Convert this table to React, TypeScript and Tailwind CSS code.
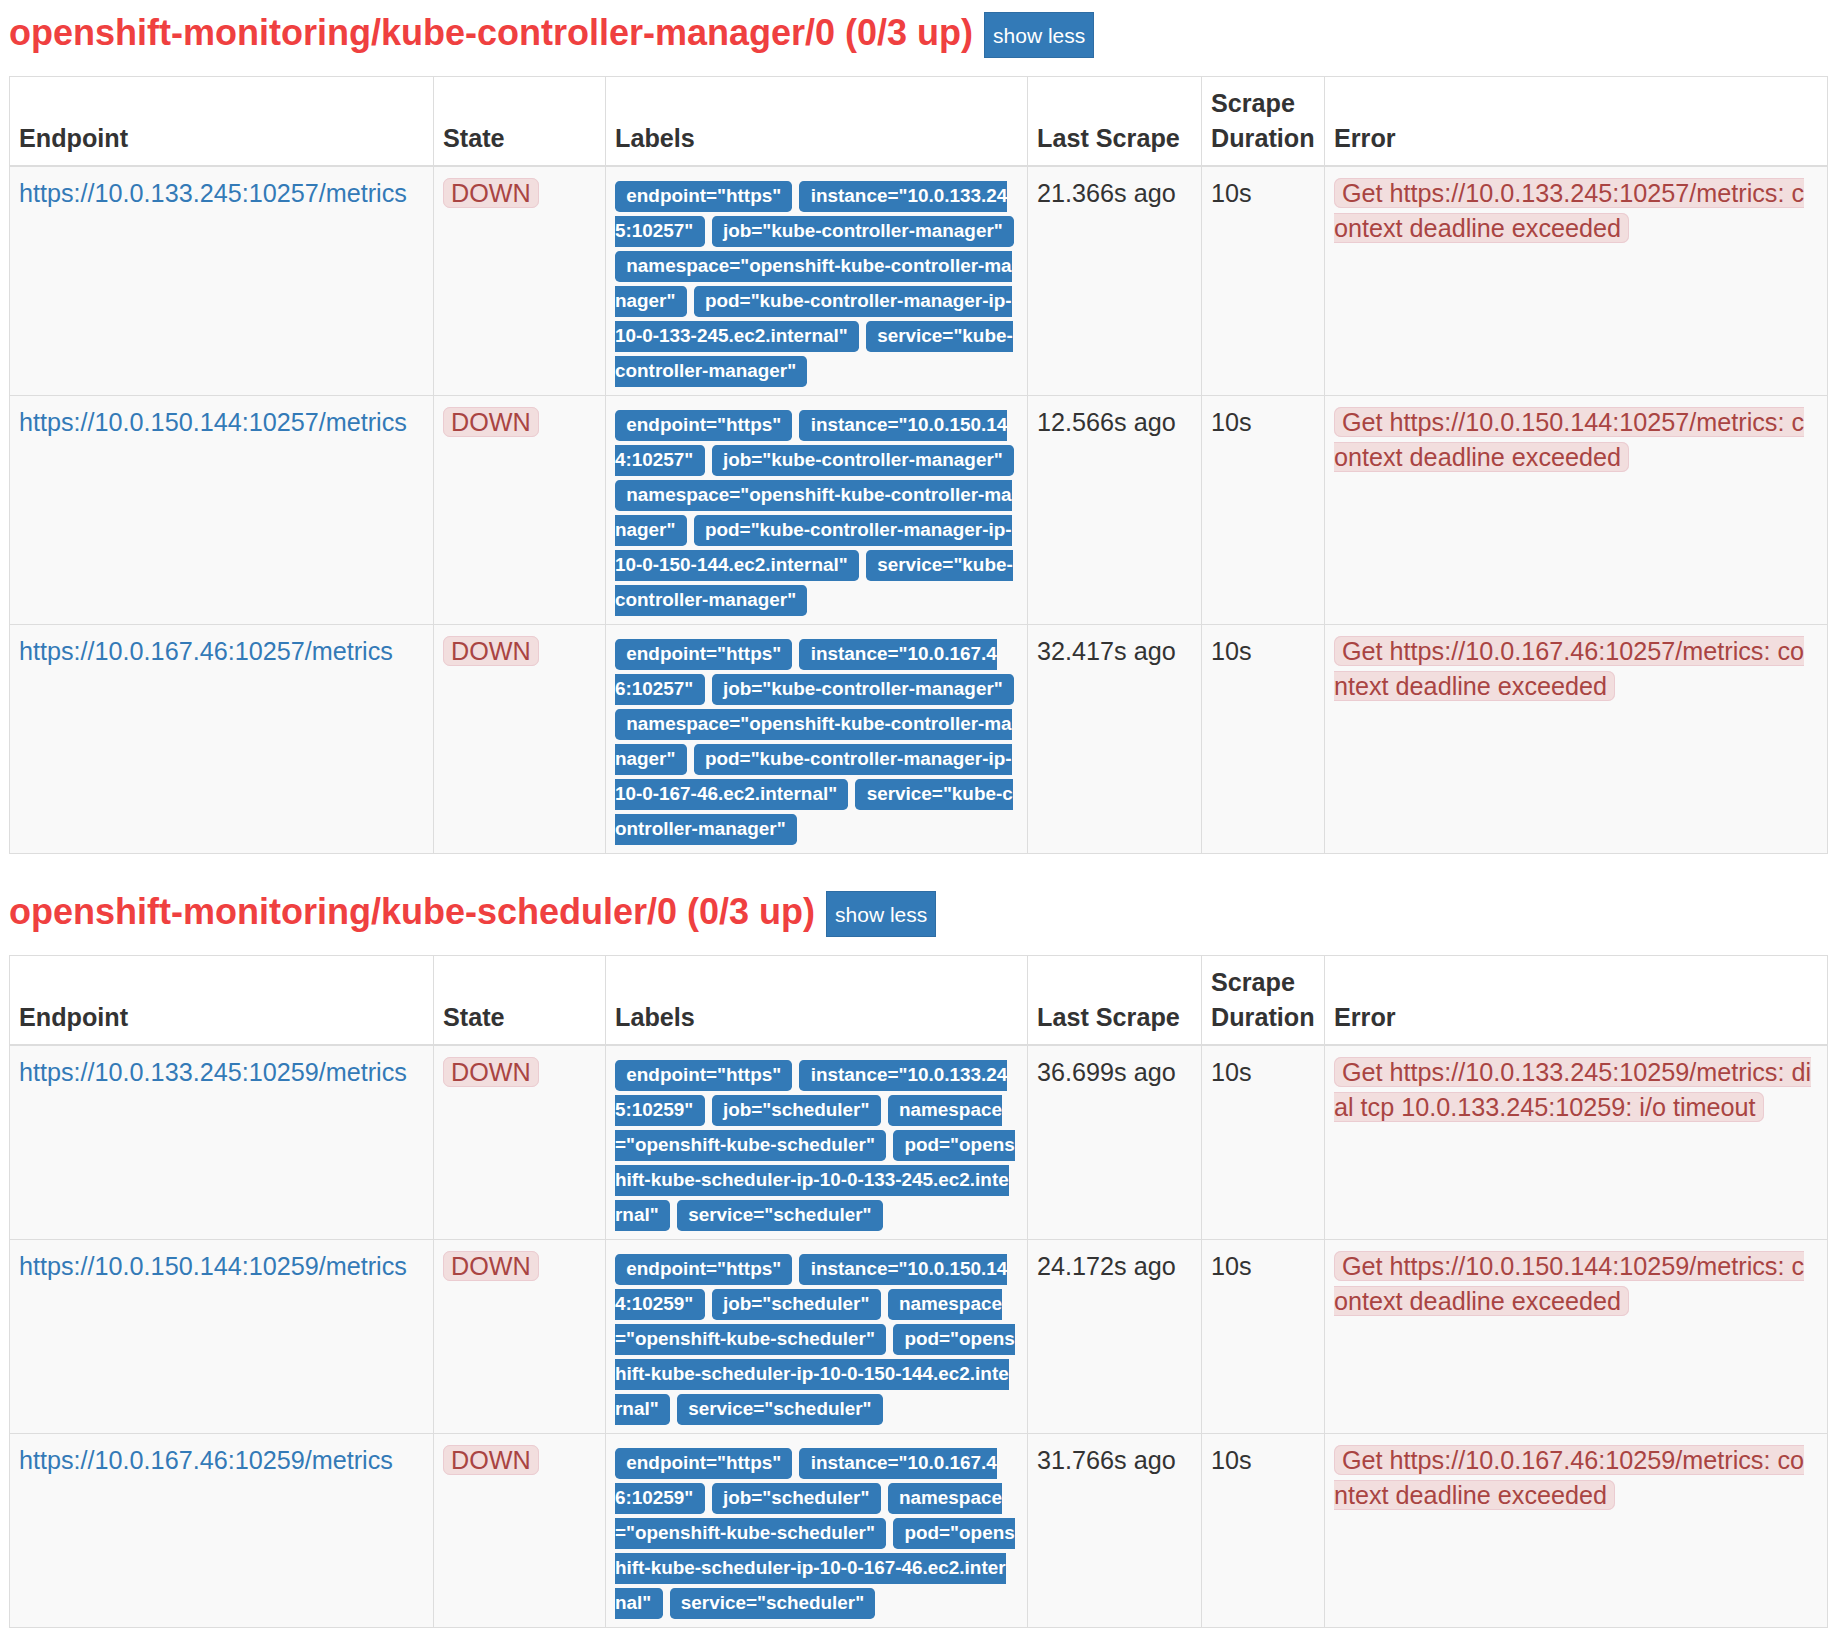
import React from "react";

type Target = {
  endpoint: string;
  labels: [string, string][];
  lastScrape: string;
  duration: string;
  error: string;
};

type Group = {
  title: string;
  targets: Target[];
};

// word joiner keeps host:port from wrapping right after the colon
const WJ = "\u2060";

const kcm = (ip: string, ago: string): Target => ({
  endpoint: `https://${ip}:10257/metrics`,
  labels: [
    ["endpoint", "https"],
    ["instance", `${ip}:${WJ}10257`],
    ["job", "kube-controller-manager"],
    ["namespace", "openshift-kube-controller-manager"],
    ["pod", `kube-controller-manager-ip-${ip.replace(/\./g, "-")}.ec2.internal`],
    ["service", "kube-controller-manager"],
  ],
  lastScrape: ago,
  duration: "10s",
  error: `Get https://${ip}:10257/metrics: context deadline exceeded`,
});

const sched = (ip: string, ago: string, error?: string): Target => ({
  endpoint: `https://${ip}:10259/metrics`,
  labels: [
    ["endpoint", "https"],
    ["instance", `${ip}:${WJ}10259`],
    ["job", "scheduler"],
    ["namespace", "openshift-kube-scheduler"],
    ["pod", `openshift-kube-scheduler-ip-${ip.replace(/\./g, "-")}.ec2.internal`],
    ["service", "scheduler"],
  ],
  lastScrape: ago,
  duration: "10s",
  error: error ?? `Get https://${ip}:10259/metrics: context deadline exceeded`,
});

const groups: Group[] = [
  {
    title: "openshift-monitoring/kube-controller-manager/0 (0/3 up)",
    targets: [
      kcm("10.0.133.245", "21.366s ago"),
      kcm("10.0.150.144", "12.566s ago"),
      kcm("10.0.167.46", "32.417s ago"),
    ],
  },
  {
    title: "openshift-monitoring/kube-scheduler/0 (0/3 up)",
    targets: [
      sched(
        "10.0.133.245",
        "36.699s ago",
        "Get https://10.0.133.245:10259/metrics: dial tcp 10.0.133.245:10259: i/o timeout"
      ),
      sched("10.0.150.144", "24.172s ago"),
      sched("10.0.167.46", "31.766s ago"),
    ],
  },
];

const th =
  "border border-[#ddd] border-b-2 px-[9px] py-[9px] text-left align-bottom font-bold text-[#333]";
const td = "border border-[#ddd] px-[9px] py-[9px] align-top";

function TargetGroup({ group, first }: { group: Group; first?: boolean }) {
  return (
    <section className={first ? "mt-[12px]" : "mt-[37px]"}>
      <h2 className="flex h-[46px] items-center">
        <a href="#" className="mb-[4px] text-[36px] font-bold leading-none text-[#ef4040]">
          {group.title}
        </a>
        <button className="ml-[11px] h-[46px] border-[1.75px] border-[#2e6da4] bg-[#337ab7] px-[8px] text-[21px] leading-none text-white">
          show less
        </button>
      </h2>
      <table className="mt-[18px] w-full table-fixed border-collapse border border-[#ddd]">
        <colgroup>
          <col className="w-[424px]" />
          <col className="w-[172px]" />
          <col className="w-[422px]" />
          <col className="w-[174px]" />
          <col className="w-[123px]" />
          <col />
        </colgroup>
        <thead className="bg-white">
          <tr>
            <th className={th}>Endpoint</th>
            <th className={th}>State</th>
            <th className={th}>Labels</th>
            <th className={th}>Last Scrape</th>
            <th className={th}>Scrape Duration</th>
            <th className={th}>Error</th>
          </tr>
        </thead>
        <tbody>
          {group.targets.map((t) => (
            <tr key={t.endpoint} className="bg-[#f9f9f9]">
              <td className={td}>
                <a href="#" className="text-[#337ab7]">
                  {t.endpoint}
                </a>
              </td>
              <td className={td}>
                <span className="rounded-[7px] border-[1.75px] border-[#ebccd1] bg-[#f2dede] px-[7px] text-[#a94442]">
                  DOWN
                </span>
              </td>
              <td className={`${td} break-all pr-[12px]`}>
                {t.labels.map(([k, v]) => (
                  <React.Fragment key={k}>
                    <span className="rounded-[4.7px] bg-[#337ab7] px-[11.3px] pt-[3.8px] pb-[5.7px] text-[18.9px] font-bold leading-none text-white">
                      {`${k}="${v}"`}
                    </span>{" "}
                  </React.Fragment>
                ))}
              </td>
              <td className={td}>{t.lastScrape}</td>
              <td className={td}>{t.duration}</td>
              <td className={`${td} break-all`}>
                <span className="rounded-[7px] border-[1.75px] border-[#ebccd1] bg-[#f2dede] px-[7px] text-[#a94442]">
                  {t.error}
                </span>
              </td>
            </tr>
          ))}
        </tbody>
      </table>
    </section>
  );
}

export default function App() {
  return (
    <div className="min-h-[1640px] bg-white pl-[9px] pr-[14px] font-['Liberation_Sans',Arial,sans-serif] text-[25.2px] leading-[35px] text-[#333]">
      {groups.map((g, i) => (
        <TargetGroup key={g.title} group={g} first={i === 0} />
      ))}
    </div>
  );
}
